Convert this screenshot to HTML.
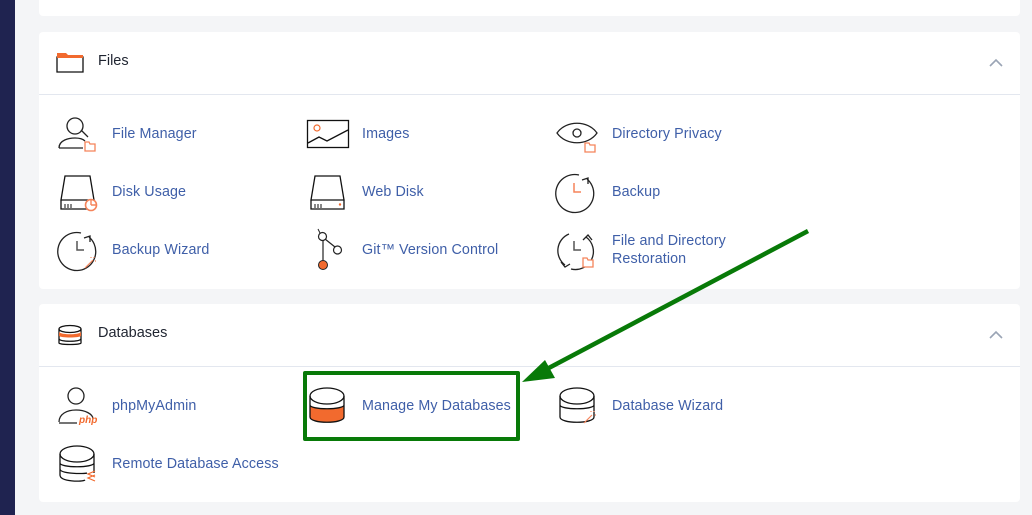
<!DOCTYPE html>
<html><head><meta charset="utf-8"><style>
body{margin:0;width:1032px;height:515px;background:#f4f5f7;position:relative;overflow:hidden;font-family:"Liberation Sans",sans-serif}
.side{position:absolute;left:0;top:0;width:15px;height:515px;background:#1f2350}
.card{position:absolute;left:39px;width:981px;background:#fff;border-radius:4px}
.hd{position:absolute;left:58px;font-size:14.5px;color:#1f2430}
.hr{position:absolute;left:39px;width:981px;height:1px;background:#e3e7ef}
.t{position:absolute;font-size:14.3px;color:#3f5fa8;line-height:18px;letter-spacing:0.1px}
svg.i{position:absolute;overflow:visible}
</style></head><body>
<div class="side"></div>
<div class="card" style="top:-5px;height:21px"></div>
<div class="card" style="top:32px;height:257px"></div>
<div class="hr" style="top:94px"></div>
<div class="card" style="top:304px;height:198px"></div>
<div class="hr" style="top:366px"></div>

<svg class="i" style="left:56px;top:53px" width="28" height="20"><path d="M1 4H27V19H1Z" fill="none" stroke="#111" stroke-width="1.3"/><path d="M1 0H10L12 2H27V5H1Z" fill="#f26a2e"/></svg>
<div class="hd" style="left:98px;top:53px">Files</div>
<svg class="i" style="left:989px;top:58px" width="14" height="9"><path d="M1 8L7 2L13 8" fill="none" stroke="#9aa4b5" stroke-width="1.6"/></svg>

<svg class="i" style="left:58px;top:325px" width="24" height="22"><ellipse cx="12" cy="4" rx="11" ry="3.5" fill="none" stroke="#111" stroke-width="1.3"/><path d="M1 4V18C1 20 23 20 23 18V4" fill="none" stroke="#111" stroke-width="1.3"/><path d="M1 7C3 10 21 10 23 7V11C21 13 3 13 1 11Z" fill="#f26a2e"/><path d="M1 14C3 17 21 17 23 14" fill="none" stroke="#111" stroke-width="1.3"/></svg>
<div class="hd" style="left:98px;top:325px">Databases</div>
<svg class="i" style="left:989px;top:330px" width="14" height="9"><path d="M1 8L7 2L13 8" fill="none" stroke="#9aa4b5" stroke-width="1.6"/></svg>

<svg class="i" style="left:57px;top:116px" width="40" height="36"><circle cx="18" cy="10" r="8" fill="none" stroke="#222" stroke-width="1.3"/><path d="M2 32C2 24 12 22 18 22C22 22 26 23 28 25M2 32H26M24 14L31 21" fill="none" stroke="#222" stroke-width="1.3"/><path d="M28 26H32L33 28H38V35H28Z" fill="none" stroke="#f5845a" stroke-width="1.3"/></svg>
<div class="t" style="left:112px;top:125px">File Manager</div>
<svg class="i" style="left:307px;top:120px" width="42" height="28"><rect x="0.5" y="0.5" width="41" height="27" fill="none" stroke="#111" stroke-width="1.3"/><circle cx="10" cy="8" r="3" fill="none" stroke="#f26a2e" stroke-width="1.2"/><path d="M1 23L12 17L20 21L41 10" fill="none" stroke="#111" stroke-width="1.3"/></svg>
<div class="t" style="left:362px;top:125px">Images</div>
<svg class="i" style="left:556px;top:120px" width="42" height="32"><path d="M1 13C10 0 32 0 41 13C32 26 10 26 1 13Z" fill="none" stroke="#222" stroke-width="1.3"/><circle cx="21" cy="13" r="4" fill="none" stroke="#222" stroke-width="1.3"/><path d="M29 23H33L34 25H39V32H29Z" fill="#fff" stroke="#f5845a" stroke-width="1.3"/></svg>
<div class="t" style="left:612px;top:125px">Directory Privacy</div>

<svg class="i" style="left:60px;top:175px" width="42" height="36"><path d="M5 1H30L34 25H1Z M1 25H34V34H1Z" fill="none" stroke="#111" stroke-width="1.3"/><path d="M5 29V33M8 29V33M11 29V33" stroke="#111"/><circle cx="31" cy="30" r="5.5" fill="#fff" stroke="#f5845a" stroke-width="1.6"/><path d="M31 30V24.5M31 30H36.5" stroke="#f5845a" stroke-width="1.4"/></svg>
<div class="t" style="left:112px;top:183px">Disk Usage</div>
<svg class="i" style="left:310px;top:175px" width="36" height="36"><path d="M5 1H30L34 25H1Z M1 25H34V34H1Z" fill="none" stroke="#111" stroke-width="1.3"/><path d="M5 29V33M8 29V33M11 29V33" stroke="#111"/><circle cx="30" cy="29.5" r="1.2" fill="#f26a2e"/></svg>
<div class="t" style="left:362px;top:183px">Web Disk</div>
<svg class="i" style="left:556px;top:172px" width="44" height="42"><path d="M31 6A19 19 0 1 1 23 2" fill="none" stroke="#222" stroke-width="1.3" transform="translate(0 1)"/><path d="M26 8L32 6L32 12" fill="none" stroke="#222" stroke-width="1.3"/><path d="M18 11V20H25" fill="none" stroke="#f5845a" stroke-width="1.5"/></svg>
<div class="t" style="left:612px;top:183px">Backup</div>

<svg class="i" style="left:58px;top:230px" width="44" height="42"><path d="M31 6A19 19 0 1 1 23 2" fill="none" stroke="#222" stroke-width="1.3" transform="translate(0 1)"/><path d="M26 8L32 6L32 12" fill="none" stroke="#222" stroke-width="1.3"/><path d="M19 11V20H26" fill="none" stroke="#555" stroke-width="1.5"/><path d="M27 38L35 30M33 27V28M37 31H38M36 27V28" stroke="#f5845a" stroke-width="1.2"/></svg>
<div class="t" style="left:112px;top:241px">Backup Wizard</div>
<svg class="i" style="left:314px;top:229px" width="30" height="42"><circle cx="8.5" cy="7.5" r="4" fill="#fff" stroke="#222" stroke-width="1.2"/><circle cx="23.5" cy="21" r="4" fill="#fff" stroke="#222" stroke-width="1.2"/><path d="M9 11V32M11 10L21 18" stroke="#222" stroke-width="1.2"/><path d="M4 0L6 4" stroke="#222"/><circle cx="9" cy="36" r="4.5" fill="#f26a2e" stroke="#222"/></svg>
<div class="t" style="left:362px;top:241px">Git™ Version Control</div>
<svg class="i" style="left:556px;top:231px" width="44" height="40"><path d="M13 3A18 18 0 0 0 9 34M15 38A18 18 0 0 0 30 6" fill="none" stroke="#222" stroke-width="1.3"/><path d="M27 9L32 4L36 9M5 31L9 36L14 33" fill="none" stroke="#222" stroke-width="1.3"/><path d="M18 10V19H25" fill="none" stroke="#555" stroke-width="1.5"/><path d="M27 27H31L32 29H37V36H27Z" fill="#fff" stroke="#f5845a" stroke-width="1.3"/></svg>
<div class="t" style="left:612px;top:232px">File and Directory<br>Restoration</div>

<svg class="i" style="left:57px;top:387px" width="42" height="40"><circle cx="19" cy="9" r="8" fill="none" stroke="#222" stroke-width="1.3"/><path d="M2 35C2 27 10 23 19 23C28 23 36 27 36 32" fill="none" stroke="#222" stroke-width="1.3"/><path d="M2 36H20" stroke="#222" stroke-width="1.3"/><text x="22" y="36" font-family="Liberation Sans" font-style="italic" font-weight="bold" font-size="10" fill="#f26a2e">php</text></svg>
<div class="t" style="left:112px;top:397px">phpMyAdmin</div>
<svg class="i" style="left:309px;top:387px" width="38" height="38"><path d="M1 18V30C1 37 35 37 35 30V18C35 23 1 23 1 18Z" fill="#f26a2e"/><ellipse cx="18" cy="9" rx="17" ry="8" fill="none" stroke="#111" stroke-width="1.3"/><path d="M1 9V30C1 37 35 37 35 30V9M1 18C1 23 35 23 35 18" fill="none" stroke="#111" stroke-width="1.3"/></svg>
<div class="t" style="left:362px;top:397px">Manage My Databases</div>
<svg class="i" style="left:559px;top:387px" width="42" height="38"><ellipse cx="18" cy="9" rx="17" ry="8" fill="none" stroke="#111" stroke-width="1.3"/><path d="M1 9V30C1 37 35 37 35 30V9M1 18C1 23 35 23 35 18" fill="none" stroke="#111" stroke-width="1.3"/><path d="M25 36L33 28M32 24V25M36 28H37M35 24V25" stroke="#f5845a" stroke-width="1.2"/></svg>
<div class="t" style="left:612px;top:397px">Database Wizard</div>

<svg class="i" style="left:59px;top:445px" width="42" height="38"><ellipse cx="18" cy="9" rx="17" ry="8" fill="none" stroke="#111" stroke-width="1.3"/><path d="M1 9V30C1 37 24 37 26 35M35 28V9M1 18C1 23 35 23 35 18M1 24C1 29 26 29 28 28" fill="none" stroke="#111" stroke-width="1.3"/><path d="M36 29L29 32L36 35M36 33L29 36L36 39" fill="none" stroke="#f26a2e" stroke-width="1.2" transform="translate(0 -3)"/></svg>
<div class="t" style="left:112px;top:455px">Remote Database Access</div>

<div style="position:absolute;left:303px;top:371px;width:209px;height:62px;border:4px solid #087a08;border-radius:2px"></div>
<svg class="i" style="left:0;top:0" width="1032" height="515"><path d="M808 231L545 370" stroke="#087a08" stroke-width="4.5"/><path d="M522 382L545 360L555 378Z" fill="#087a08"/></svg>
</body></html>
